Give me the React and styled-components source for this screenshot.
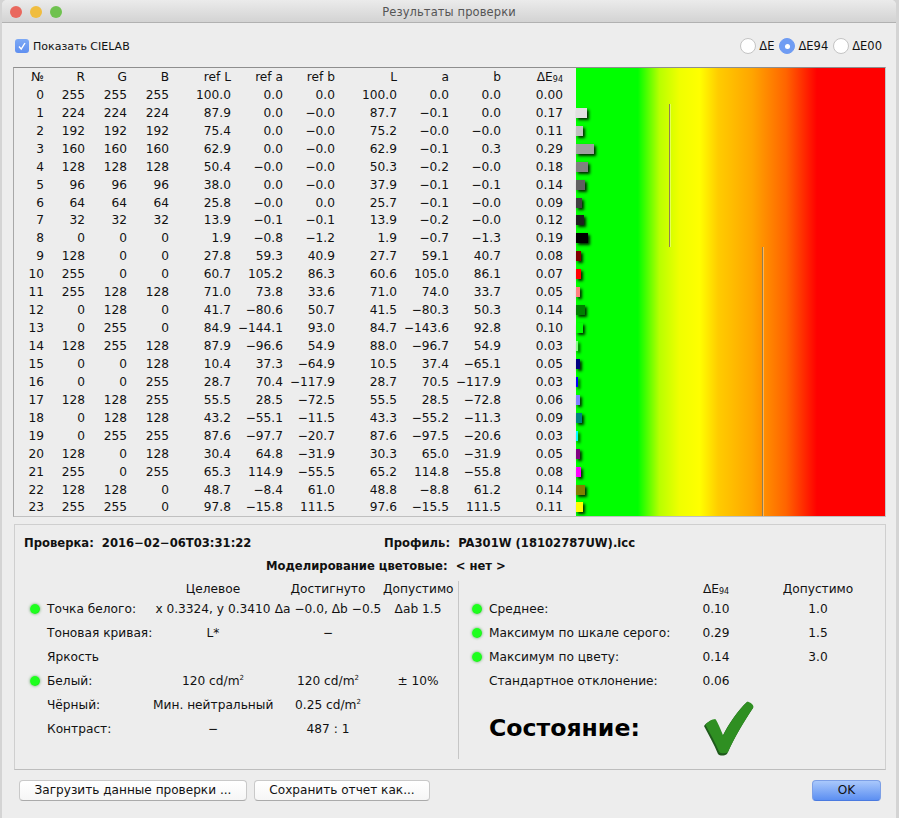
import React from "react";
import styled, { createGlobalStyle } from "styled-components";

const rows = [
  [0, 255, 255, 255, "100.0", "0.0", "0.0", "100.0", "0.0", "0.0", "0.00"],
  [1, 224, 224, 224, "87.9", "0.0", "-0.0", "87.7", "-0.1", "0.0", "0.17"],
  [2, 192, 192, 192, "75.4", "0.0", "-0.0", "75.2", "-0.0", "-0.0", "0.11"],
  [3, 160, 160, 160, "62.9", "0.0", "-0.0", "62.9", "-0.1", "0.3", "0.29"],
  [4, 128, 128, 128, "50.4", "-0.0", "-0.0", "50.3", "-0.2", "-0.0", "0.18"],
  [5, 96, 96, 96, "38.0", "0.0", "-0.0", "37.9", "-0.1", "-0.1", "0.14"],
  [6, 64, 64, 64, "25.8", "-0.0", "0.0", "25.7", "-0.1", "-0.0", "0.09"],
  [7, 32, 32, 32, "13.9", "-0.1", "-0.1", "13.9", "-0.2", "-0.0", "0.12"],
  [8, 0, 0, 0, "1.9", "-0.8", "-1.2", "1.9", "-0.7", "-1.3", "0.19"],
  [9, 128, 0, 0, "27.8", "59.3", "40.9", "27.7", "59.1", "40.7", "0.08"],
  [10, 255, 0, 0, "60.7", "105.2", "86.3", "60.6", "105.0", "86.1", "0.07"],
  [11, 255, 128, 128, "71.0", "73.8", "33.6", "71.0", "74.0", "33.7", "0.05"],
  [12, 0, 128, 0, "41.7", "-80.6", "50.7", "41.5", "-80.3", "50.3", "0.14"],
  [13, 0, 255, 0, "84.9", "-144.1", "93.0", "84.7", "-143.6", "92.8", "0.10"],
  [14, 128, 255, 128, "87.9", "-96.6", "54.9", "88.0", "-96.7", "54.9", "0.03"],
  [15, 0, 0, 128, "10.4", "37.3", "-64.9", "10.5", "37.4", "-65.1", "0.05"],
  [16, 0, 0, 255, "28.7", "70.4", "-117.9", "28.7", "70.5", "-117.9", "0.03"],
  [17, 128, 128, 255, "55.5", "28.5", "-72.5", "55.5", "28.5", "-72.8", "0.06"],
  [18, 0, 128, 128, "43.2", "-55.1", "-11.5", "43.3", "-55.2", "-11.3", "0.09"],
  [19, 0, 255, 255, "87.6", "-97.7", "-20.7", "87.6", "-97.5", "-20.6", "0.03"],
  [20, 128, 0, 128, "30.4", "64.8", "-31.9", "30.3", "65.0", "-31.9", "0.05"],
  [21, 255, 0, 255, "65.3", "114.9", "-55.5", "65.2", "114.8", "-55.8", "0.08"],
  [22, 128, 128, 0, "48.7", "-8.4", "61.0", "48.8", "-8.8", "61.2", "0.14"],
  [23, 255, 255, 0, "97.8", "-15.8", "111.5", "97.6", "-15.5", "111.5", "0.11"],
];

const GlobalStyle = createGlobalStyle`
  html, body {
    margin: 0;
    height: 100%;
    background: #d4d4d4;
  }
  body {
    font-family: "DejaVu Sans", "Liberation Sans", sans-serif;
    font-size: 12.2px;
    color: #111;
  }
`;

const Window = styled.div`
  width: 894px;
  height: 818px;
  margin-left: 2px;
  background: #ededed;
  border-radius: 5px 5px 0 0;
  display: flex;
  flex-direction: column;
  overflow: hidden;
`;

const TitleBar = styled.div`
  height: 20px;
  flex: none;
  display: flex;
  align-items: center;
  position: relative;
  padding: 2px 0 0 8px;
  gap: 8px;
  background: linear-gradient(#ebebeb, #d3d3d3);
  border-bottom: 1px solid #b1b1b1;
`;

const Light = styled.span`
  width: 12px;
  height: 12px;
  border-radius: 50%;
  background: ${(p) => p.$color};
`;

const Title = styled.div`
  position: absolute;
  left: 0;
  right: 0;
  text-align: center;
  color: #555;
  font-size: 11.5px;
  letter-spacing: 0.1px;
`;

const OptionBar = styled.div`
  height: 42px;
  flex: none;
  display: flex;
  align-items: center;
  justify-content: space-between;
  padding: 2px 11px 0 13px;
`;

const Check = styled.label`
  display: flex;
  align-items: center;
  gap: 4px;
  font-size: 11px;
`;

const CheckBox = styled.span`
  width: 14px;
  height: 14px;
  border-radius: 3px;
  background: linear-gradient(#7da9f5, #5f8ff0);
  display: flex;
  align-items: center;
  justify-content: center;
`;

const Radios = styled.div`
  display: flex;
  align-items: center;
  gap: 3px;
  font-size: 11.5px;
`;

const Radio = styled.span`
  width: 16px;
  height: 16px;
  margin-left: -1px;
  border-radius: 50%;
  box-sizing: border-box;
  background: ${(p) => (p.$on ? "#6f9cf3" : "#fff")};
  border: 1px solid ${(p) => (p.$on ? "#6f9cf3" : "#c4c4c4")};
  display: flex;
  align-items: center;
  justify-content: center;
  &::after {
    content: "";
    display: ${(p) => (p.$on ? "block" : "none")};
    width: 5px;
    height: 5px;
    border-radius: 50%;
    background: #fff;
  }
`;

const RadioText = styled.span`
  margin-right: 3px;
`;

const TableFrame = styled.div`
  margin-left: 11px;
  width: 873px;
  height: 450px;
  flex: none;
  display: flex;
  box-sizing: border-box;
  border-top: 1px solid #8e8e8e;
  border-left: 1px solid #a8a8a8;
  border-bottom: 1px solid #c0c0c0;
  border-right: 1px solid #c8c8c8;
`;

const DataTable = styled.div`
  width: 562px;
  flex: none;
`;

const Row = styled.div`
  height: 17.95px;
  display: grid;
  grid-template-columns: 30px 41px 42px 42px 62px 52px 52px 62px 52px 52px 62px;
  align-items: center;
`;

const Cell = styled.span`
  text-align: right;
  white-space: nowrap;
`;

const Chart = styled.div`
  flex: 1;
  position: relative;
  background: linear-gradient(
    90deg,
    #00ff00 0%,
    #00ff00 20%,
    #b8ff00 27%,
    #f0ff00 33.5%,
    #ffff00 40%,
    #ffcc00 46%,
    #ffa500 57%,
    #ff6400 68%,
    #ff0000 78%,
    #ff0000 100%
  );
`;

const BarRow = styled.div`
  height: 17.95px;
  display: flex;
  align-items: center;
`;

const Bar = styled.div`
  height: 10px;
  box-shadow: 2px 2px 3px rgba(0, 0, 0, 0.85);
`;

const Marker = styled.div`
  position: absolute;
  left: ${(p) => p.$x}px;
  top: ${(p) => p.$top}px;
  height: ${(p) => p.$h}px;
  width: 1px;
  background: #8f7f55;
  box-shadow: 1px 0 0 rgba(255, 255, 255, 0.35);
`;

const Panel = styled.div`
  margin: 7px 0 0 12px;
  width: 872px;
  height: 246px;
  flex: none;
  box-sizing: border-box;
  border: 1px solid #cfcfcf;
  border-bottom-color: #bdbdbd;
  padding-top: 10px;
`;

const InfoLine = styled.div`
  height: 16px;
  display: flex;
  align-items: center;
  font-weight: bold;
  font-size: 11.6px;
  white-space: pre;
`;

const InfoRow = styled(InfoLine)`
  padding-left: 9px;
  margin-bottom: 7px;
`;

const InfoCentered = styled(InfoLine)`
  padding-left: 251px;
`;

const InfoProfile = styled.span`
  position: absolute;
  left: 384px;
`;

const Columns = styled.div`
  display: flex;
  margin-top: 7px;
`;

const LeftPane = styled.div`
  width: 445px;
  height: 178px;
  box-sizing: border-box;
  border-right: 1px solid #c6c6c6;
`;

const RightPane = styled.div`
  flex: 1;
`;

const GridHead = styled.div`
  height: 16px;
  display: grid;
  grid-template-columns: ${(p) => p.$cols};
  align-items: center;
  text-align: center;
  white-space: nowrap;
`;

const GridRow = styled(GridHead)`
  height: 24px;
`;

const Label = styled.span`
  display: flex;
  align-items: center;
  text-align: left;
`;

const Dot = styled.span`
  width: 10px;
  height: 10px;
  margin: 0 7px 0 ${(p) => p.$ml}px;
  border-radius: 50%;
  flex: none;
  background: radial-gradient(circle at 45% 45%, #1eff1e 55%, #10b810 100%);
  box-shadow: 0 0 3px rgba(0, 120, 0, 0.6);
  visibility: ${(p) => (p.$off ? "hidden" : "visible")};
`;

const Sub = styled.span`
  font-size: 8px;
  vertical-align: -1px;
`;

const Sup = styled.sup`
  font-size: 7px;
  line-height: 0;
`;

const StatusRow = styled.div`
  display: flex;
  align-items: center;
  height: 58px;
  margin-top: 6px;
  padding-left: 30px;
`;

const StatusText = styled.div`
  font-size: 23.6px;
  font-weight: bold;
  width: 214px;
  color: #000;
`;

const Footer = styled.div`
  flex: 1;
  display: flex;
  align-items: flex-start;
  padding: 10px 15px 0 17px;
  gap: 7px;
`;

const Button = styled.button`
  height: 21px;
  width: ${(p) => p.$w}px;
  padding: 0 0 1px;
  font: inherit;
  font-size: 12.1px;
  color: #111;
  background: linear-gradient(#fff, #f6f6f6);
  border: 1px solid #c9c9c9;
  border-bottom-color: #aaa;
  border-radius: 4px;
`;

const PrimaryButton = styled(Button)`
  margin-left: auto;
  background: linear-gradient(#a9c8fb, #5c8ff2);
  border-color: #7c9fe6;
  border-bottom-color: #4a7ae0;
`;

const COLS_L = "138px 120px 110px 70px";
const COLS_R = "222px 70px 134px";

const CHECK_D =
  "M1 26 C3 23 8 20 11 20 C14 24 17 32 19 37 C25 25 35 10 44 2 C47 3 50 5 50 8 C42 20 31 38 24 54 C21 56 17 56 15 54 C11 44 5 34 1 26 Z";

const DE94 = () => (
  <>
    ΔE<Sub>94</Sub>
  </>
);

const App = () => {
  return (
    <>
      <GlobalStyle />
      <Window>
        <TitleBar>
          <Light $color="#e9685e" />
          <Light $color="#f0bd3f" />
          <Light $color="#6fc24f" />
          <Title>Результаты проверки</Title>
        </TitleBar>
        <OptionBar>
          <Check>
            <CheckBox>
              <svg width="10" height="10" viewBox="0 0 10 10">
                <path d="M2 5.5 L4.2 8 L8 2" fill="none" stroke="#fff" strokeWidth="1.4" />
              </svg>
            </CheckBox>
            Показать CIELAB
          </Check>
          <Radios>
            <Radio />
            <RadioText>ΔE</RadioText>
            <Radio $on />
            <RadioText>ΔE94</RadioText>
            <Radio />
            <RadioText>ΔE00</RadioText>
          </Radios>
        </OptionBar>
        <TableFrame>
          <DataTable>
            <Row>
              {["№", "R", "G", "B", "ref L", "ref a", "ref b", "L", "a", "b"].map((h) => (
                <Cell key={h}>{h}</Cell>
              ))}
              <Cell>
                <DE94 />
              </Cell>
            </Row>
            {rows.map((r) => (
              <Row key={r[0]}>
                {r.map((v, i) => (
                  <Cell key={i}>{String(v).replace("-", "−")}</Cell>
                ))}
              </Row>
            ))}
          </DataTable>
          <Chart>
            <BarRow />
            {rows.map((r) => (
              <BarRow key={r[0]}>
                {Number(r[10]) > 0 && (
                  <Bar
                    style={{
                      width: Number(r[10]) * 62 + 0.5,
                      background: `rgb(${r[1]},${r[2]},${r[3]})`,
                    }}
                  />
                )}
              </BarRow>
            ))}
            <Marker $x={93} $top={36} $h={143} />
            <Marker $x={186} $top={179} $h={269} />
          </Chart>
        </TableFrame>
        <Panel>
          <InfoRow>
            <span>Проверка:  2016−02−06T03:31:22</span>
            <InfoProfile>Профиль:  PA301W (18102787UW).icc</InfoProfile>
          </InfoRow>
          <InfoCentered>Моделирование цветовые:  &lt; нет &gt;</InfoCentered>
          <Columns>
            <LeftPane>
              <GridHead $cols={COLS_L}>
                <span />
                <span>Целевое</span>
                <span>Достигнуто</span>
                <span>Допустимо</span>
              </GridHead>
              <GridRow $cols={COLS_L}>
                <Label><Dot $ml={15} />Точка белого:</Label>
                <span>x 0.3324, y 0.3410</span>
                <span>Δa −0.0, Δb −0.5</span>
                <span>Δab 1.5</span>
              </GridRow>
              <GridRow $cols={COLS_L}>
                <Label><Dot $ml={15} $off />Тоновая кривая:</Label>
                <span>L*</span>
                <span>−</span>
                <span />
              </GridRow>
              <GridRow $cols={COLS_L}>
                <Label><Dot $ml={15} $off />Яркость</Label>
              </GridRow>
              <GridRow $cols={COLS_L}>
                <Label><Dot $ml={15} />Белый:</Label>
                <span>120 cd/m<Sup>2</Sup></span>
                <span>120 cd/m<Sup>2</Sup></span>
                <span>± 10%</span>
              </GridRow>
              <GridRow $cols={COLS_L}>
                <Label><Dot $ml={15} $off />Чёрный:</Label>
                <span>Мин. нейтральный</span>
                <span>0.25 cd/m<Sup>2</Sup></span>
                <span />
              </GridRow>
              <GridRow $cols={COLS_L}>
                <Label><Dot $ml={15} $off />Контраст:</Label>
                <span>−</span>
                <span>487 : 1</span>
                <span />
              </GridRow>
            </LeftPane>
            <RightPane>
              <GridHead $cols={COLS_R}>
                <span />
                <span><DE94 /></span>
                <span>Допустимо</span>
              </GridHead>
              <GridRow $cols={COLS_R}>
                <Label><Dot $ml={13} />Среднее:</Label>
                <span>0.10</span>
                <span>1.0</span>
              </GridRow>
              <GridRow $cols={COLS_R}>
                <Label><Dot $ml={13} />Максимум по шкале серого:</Label>
                <span>0.29</span>
                <span>1.5</span>
              </GridRow>
              <GridRow $cols={COLS_R}>
                <Label><Dot $ml={13} />Максимум по цвету:</Label>
                <span>0.14</span>
                <span>3.0</span>
              </GridRow>
              <GridRow $cols={COLS_R}>
                <Label><Dot $ml={13} $off />Стандартное отклонение:</Label>
                <span>0.06</span>
                <span />
              </GridRow>
              <StatusRow>
                <StatusText>Состояние:</StatusText>
                <svg width="51" height="57" viewBox="0 0 51 57">
                  <path d={CHECK_D} fill="#1f5a1c" />
                  <path d={CHECK_D} fill="#2f8f22" transform="translate(1.5 -0.5) scale(0.98 0.97)" />
                </svg>
              </StatusRow>
            </RightPane>
          </Columns>
        </Panel>
        <Footer>
          <Button $w={228}>Загрузить данные проверки ...</Button>
          <Button $w={176}>Сохранить отчет как...</Button>
          <PrimaryButton $w={69}>OK</PrimaryButton>
        </Footer>
      </Window>
    </>
  );
};

export default App;
